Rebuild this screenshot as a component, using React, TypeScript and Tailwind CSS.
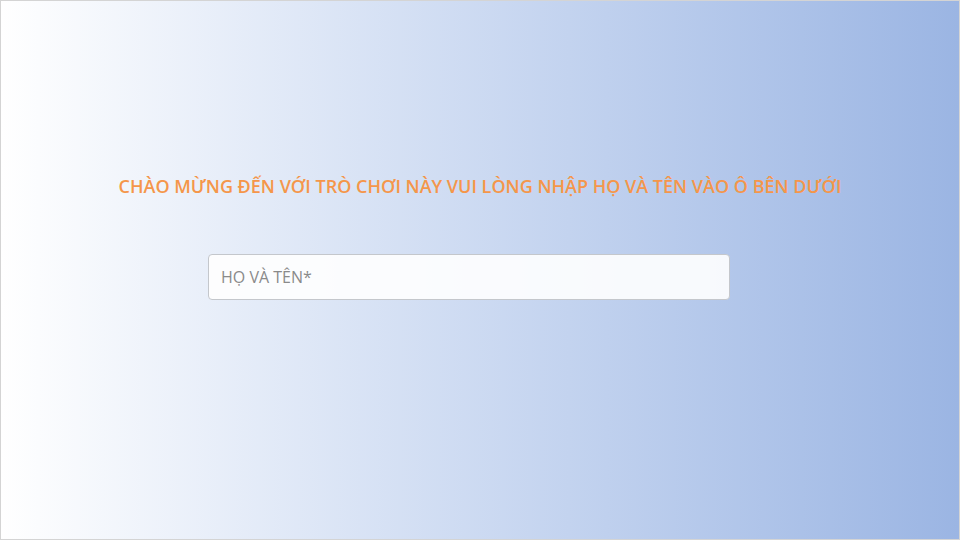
export default function App() {
  return (
    <div
      className="w-[960px] h-[540px] border border-[#d4d4d4] bg-gradient-to-r from-white to-[#9bb5e3] flex flex-col items-center pt-[173px]"
      style={{ fontFamily: '"Open Sans", "Noto Sans", sans-serif' }}
    >
      <h1 className="text-[18px] leading-[24px] font-semibold text-[#f5964a]">
        CHÀO MỪNG ĐẾN VỚI TRÒ CHƠI NÀY VUI LÒNG NHẬP HỌ VÀ TÊN VÀO Ô BÊN DƯỚI
      </h1>
      <input
        type="text"
        placeholder="HỌ VÀ TÊN*"
        className="mt-[56px] mr-[22px] w-[522px] h-[46px] rounded-[4px] border border-[#c4c7cc] bg-white/90 px-3 text-[16px] text-[#555] placeholder:text-[#8a8a8a] outline-none"
      />
    </div>
  );
}
